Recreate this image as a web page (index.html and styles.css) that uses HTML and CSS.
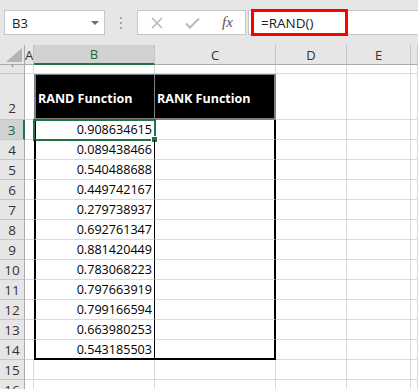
FILE: index.html
```html
<!DOCTYPE html>
<html>
<head>
<meta charset="utf-8">
<link rel="stylesheet" href="styles.css">
</head>
<body>
<div class="toolbar">
  <div class="namebox"><span class="ref">B3</span><span class="drop"></span></div>
  <div class="dots"><i></i><i></i><i></i></div>
  <div class="fxbox">
    <svg class="ico" width="12" height="12" viewBox="0 0 12 12"><path d="M1 1L11 11M11 1L1 11" stroke="#b8b8b8" stroke-width="1.6" fill="none"/></svg>
    <svg class="ico" width="15" height="12" viewBox="0 0 15 12"><path d="M1 6.5L5 10.5L14 1.5" stroke="#b8b8b8" stroke-width="2" fill="none"/></svg>
    <span class="fx">fx</span>
  </div>
  <div class="formula"><span class="ftext">=RAND()</span><div class="mark"></div></div>
</div>
<div class="sheet">
  <!-- header row -->
  <div class="corner"><svg width="16" height="14" viewBox="0 0 16 14"><path d="M16 0V14H0Z" fill="#b4b4b4"/></svg></div>
  <div class="ch">A</div>
  <div class="ch sel">B</div>
  <div class="ch">C</div>
  <div class="ch">D</div>
  <div class="ch">E</div>
  <div class="ch"></div>
  <!-- row 1 -->
  <div class="rh r1"><span>1</span></div><div class="c a"></div><div class="c"></div><div class="c"></div><div class="c"></div><div class="c"></div><div class="c"></div>
  <!-- row 2 -->
  <div class="rh bot">2</div><div class="c a2"></div><div class="hd hb">RAND Function</div><div class="hd hc">RANK Function</div><div class="c"></div><div class="c"></div><div class="c"></div>
  <!-- data rows -->
  <div class="rh rsel">3</div><div class="c a2"></div><div class="c b num"><span>0.908634615</span><div class="selbox"><div class="handle"></div></div></div><div class="c cc"></div><div class="c"></div><div class="c"></div><div class="c"></div>
  <div class="rh">4</div><div class="c a2"></div><div class="c b num">0.089438466</div><div class="c cc"></div><div class="c"></div><div class="c"></div><div class="c"></div>
  <div class="rh">5</div><div class="c a2"></div><div class="c b num">0.540488688</div><div class="c cc"></div><div class="c"></div><div class="c"></div><div class="c"></div>
  <div class="rh">6</div><div class="c a2"></div><div class="c b num">0.449742167</div><div class="c cc"></div><div class="c"></div><div class="c"></div><div class="c"></div>
  <div class="rh">7</div><div class="c a2"></div><div class="c b num">0.279738937</div><div class="c cc"></div><div class="c"></div><div class="c"></div><div class="c"></div>
  <div class="rh">8</div><div class="c a2"></div><div class="c b num">0.692761347</div><div class="c cc"></div><div class="c"></div><div class="c"></div><div class="c"></div>
  <div class="rh">9</div><div class="c a2"></div><div class="c b num">0.881420449</div><div class="c cc"></div><div class="c"></div><div class="c"></div><div class="c"></div>
  <div class="rh">10</div><div class="c a2"></div><div class="c b num">0.783068223</div><div class="c cc"></div><div class="c"></div><div class="c"></div><div class="c"></div>
  <div class="rh">11</div><div class="c a2"></div><div class="c b num">0.797663919</div><div class="c cc"></div><div class="c"></div><div class="c"></div><div class="c"></div>
  <div class="rh">12</div><div class="c a2"></div><div class="c b num">0.799166594</div><div class="c cc"></div><div class="c"></div><div class="c"></div><div class="c"></div>
  <div class="rh">13</div><div class="c a2"></div><div class="c b num">0.663980253</div><div class="c cc"></div><div class="c"></div><div class="c"></div><div class="c"></div>
  <div class="rh">14</div><div class="c a2"></div><div class="c b num last">0.543185503</div><div class="c cc last"></div><div class="c"></div><div class="c"></div><div class="c"></div>
  <div class="rh">15</div><div class="c a"></div><div class="c"></div><div class="c"></div><div class="c"></div><div class="c"></div><div class="c"></div>
  <div class="rh">16</div><div class="c a"></div><div class="c"></div><div class="c"></div><div class="c"></div><div class="c"></div><div class="c"></div>
</div>
</body>
</html>
```
FILE: styles.css
```css
html, body {
  margin: 0;
  padding: 0;
}
body {
  width: 418px;
  height: 389px;
  overflow: hidden;
  background: #ffffff;
  font-family: "Open Sans", "Liberation Sans", sans-serif;
}
.toolbar {
  height: 45px;
  background: #e6e6e6;
  display: flex;
  align-items: flex-start;
  padding: 10px 0 0 4px;
  box-sizing: border-box;
}
.namebox {
  width: 101px;
  height: 25px;
  box-sizing: border-box;
  background: #fff;
  border: 1px solid #c6c6c6;
  display: flex;
  align-items: center;
  justify-content: space-between;
  padding: 0 5px 0 7px;
}
.ref {
  font-size: 13px;
  color: #222;
}
.drop {
  width: 0;
  height: 0;
  border-left: 4px solid transparent;
  border-right: 4px solid transparent;
  border-top: 4px solid #6d6d6d;
}
.dots {
  width: 32px;
  height: 25px;
  display: flex;
  flex-direction: column;
  align-items: center;
  justify-content: center;
  gap: 3px;
}
.dots i {
  display: block;
  width: 2px;
  height: 2px;
  background: #a8a8a8;
}
.fxbox {
  width: 109px;
  height: 25px;
  box-sizing: border-box;
  background: #fff;
  border: 1px solid #c6c6c6;
  display: flex;
  align-items: center;
  padding-left: 13px;
  gap: 22px;
}
.fx {
  font-family: "Liberation Serif", serif;
  font-style: italic;
  font-size: 15px;
  color: #555;
}
.formula {
  position: relative;
  flex: 1;
  height: 25px;
  margin-left: 2px;
  box-sizing: border-box;
  background: #fff;
  border: 1px solid #c6c6c6;
  border-right: none;
  display: flex;
  align-items: center;
  padding-left: 12px;
}
.ftext {
  font-size: 13.5px;
  color: #222;
}
.mark {
  position: absolute;
  left: 2px;
  top: -2px;
  width: 97px;
  height: 27px;
  box-sizing: border-box;
  border: 3px solid #ff0000;
}
.sheet {
  display: grid;
  grid-template-columns: 25px 9px 121px 121px 71px 64px 7px;
  grid-template-rows: 20px 9px 46px repeat(14, 20px);
  font-size: 13px;
  color: #000;
}
.sheet > div {
  box-sizing: border-box;
}
.corner {
  background: #e6e6e6;
  border-right: 1px solid #ababab;
  border-bottom: 1px solid #ababab;
  display: flex;
  align-items: flex-end;
  justify-content: flex-end;
  padding: 0 2px 2px 0;
}
.corner svg {
  display: block;
}
.ch {
  background: #e6e6e6;
  border-right: 1px solid #c6c6c6;
  border-bottom: 1px solid #ababab;
  display: flex;
  align-items: center;
  justify-content: center;
  color: #333;
  font-size: 13px;
  overflow: hidden;
}
.ch.sel {
  background: #d2d2d2;
  border-bottom: 2px solid #217346;
  color: #1d6b45;
}
.rh {
  background: #e6e6e6;
  border-right: 1px solid #ababab;
  border-bottom: 1px solid #c6c6c6;
  display: flex;
  align-items: center;
  justify-content: center;
  color: #333;
  font-size: 13.5px;
  overflow: hidden;
}
.rh.r1 {
  align-items: flex-start;
}
.rh.r1 span {
  display: block;
  line-height: 14px;
  margin-top: -10px;
  color: #6a7ea0;
}
.rh.bot {
  align-items: flex-end;
  padding-bottom: 2px;
}
.rh.rsel {
  background: #d2d2d2;
  border-right: 2px solid #217346;
  color: #1d6b45;
}
.c {
  border-right: 1px solid #dadada;
  border-bottom: 1px solid #dadada;
}
.c.a2 {
  border-right: none;
}
.hd {
  background: #000;
  color: #fff;
  font-weight: bold;
  font-size: 12.5px;
  display: flex;
  align-items: center;
  padding: 3px 0 0 2px;
  border-top: 1px solid #808080;
  border-bottom: 2px solid #808080;
  white-space: nowrap;
}
.hd.hb {
  border-left: 2px solid #808080;
  border-right: 1px solid #808080;
}
.hd.hc {
  border-right: 2px solid #808080;
}
.c.b {
  border-left: 2px solid #000;
  border-right: 1px solid #000;
}
.c.cc {
  border-right: 2px solid #000;
}
.c.last {
  border-bottom: 2px solid #000;
}
.num {
  position: relative;
  display: flex;
  align-items: center;
  justify-content: flex-end;
  padding-right: 2px;
  font-size: 12.6px;
}
.selbox {
  position: absolute;
  left: -3px;
  right: -2px;
  top: -1px;
  bottom: -2px;
  border: 2px solid #217346;
}
.handle {
  position: absolute;
  right: -4px;
  bottom: -4px;
  width: 5px;
  height: 5px;
  background: #217346;
  border: 1px solid #fff;
}
```
